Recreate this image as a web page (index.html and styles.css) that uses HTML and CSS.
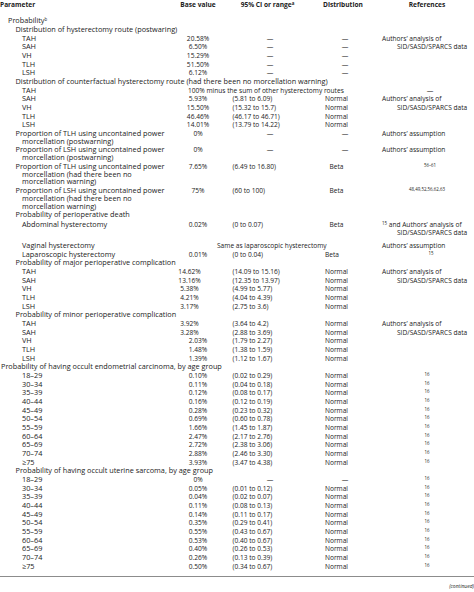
FILE: index.html
```html
<!DOCTYPE html>
<html>
<head>
<meta charset="utf-8">
<link rel="stylesheet" href="styles.css">
</head>
<body>
<table class="tbl">
<colgroup><col class="c1"><col class="c2"><col class="c3"><col class="c4"><col class="c5"></colgroup>
<thead>
<tr class="head">
<th class="h-param">Parameter</th>
<th class="h-bv">Base value</th>
<th class="h-ci">95% CI or range<span class="sup">a</span></th>
<th class="h-dist">Distribution</th>
<th class="h-ref">References</th>
</tr>
</thead>
<tbody>
<tr class="first"><td class="l0" colspan="5">Probability<span class="sup">b</span></td></tr>
<tr><td class="l1" colspan="5">Distribution of hysterectomy route (postwaring)</td></tr>
<tr><td class="l2">TAH</td><td class="bv">20.58%</td><td class="ci-d">—</td><td class="di-d">—</td><td class="rf">Authors’ analysis of</td></tr>
<tr><td class="l2">SAH</td><td class="bv">6.50%</td><td class="ci-d">—</td><td class="di-d">—</td><td class="rf cont">SID/SASD/SPARCS data</td></tr>
<tr><td class="l2">VH</td><td class="bv">15.29%</td><td class="ci-d">—</td><td class="di-d">—</td><td></td></tr>
<tr><td class="l2">TLH</td><td class="bv">51.50%</td><td class="ci-d">—</td><td class="di-d">—</td><td></td></tr>
<tr><td class="l2">LSH</td><td class="bv">6.12%</td><td class="ci-d">—</td><td class="di-d">—</td><td></td></tr>
<tr><td class="l1" colspan="5">Distribution of counterfactual hysterectomy route (had there been no morcellation warning)</td></tr>
<tr><td class="l2">TAH</td><td class="span-minus" colspan="3">100% minus the sum of other hysterectomy routes</td><td class="rf-d">—</td></tr>
<tr><td class="l2">SAH</td><td class="bv">5.93%</td><td class="ci">(5.81 to 6.09)</td><td class="di">Normal</td><td class="rf">Authors’ analysis of</td></tr>
<tr><td class="l2">VH</td><td class="bv">15.50%</td><td class="ci">(15.32 to 15.7)</td><td class="di">Normal</td><td class="rf cont">SID/SASD/SPARCS data</td></tr>
<tr><td class="l2">TLH</td><td class="bv">46.46%</td><td class="ci">(46.17 to 46.71)</td><td class="di">Normal</td><td></td></tr>
<tr><td class="l2">LSH</td><td class="bv">14.01%</td><td class="ci">(13.79 to 14.22)</td><td class="di">Normal</td><td></td></tr>
<tr><td class="l1w">Proportion of TLH using uncontained power morcellation (postwarning)</td><td class="bv">0%</td><td class="ci-d">—</td><td class="di-d">—</td><td class="rf">Authors’ assumption</td></tr>
<tr><td class="l1w">Proportion of LSH using uncontained power morcellation (postwarning)</td><td class="bv">0%</td><td class="ci-d">—</td><td class="di-d">—</td><td class="rf">Authors’ assumption</td></tr>
<tr><td class="l1w">Proportion of TLH using uncontained power morcellation (had there been no morcellation warning)</td><td class="bv">7.65%</td><td class="ci">(6.49 to 16.80)</td><td class="di">Beta</td><td class="rf-s rf-s1"><span class="sup">56–61</span></td></tr>
<tr><td class="l1w">Proportion of LSH using uncontained power morcellation (had there been no morcellation warning)</td><td class="bv">75%</td><td class="ci">(60 to 100)</td><td class="di">Beta</td><td class="rf-s"><span class="sup">48,49,52,56,62,63</span></td></tr>
<tr><td class="l1" colspan="5">Probability of perioperative death</td></tr>
<tr class="tall"><td class="l2">Abdominal hysterectomy</td><td class="bv">0.02%</td><td class="ci">(0 to 0.07)</td><td class="di">Beta</td><td class="rf rf-wrap"><span class="sup">15</span> and Authors’ analysis of SID/SASD/SPARCS data</td></tr>
<tr><td class="l2">Vaginal hysterectomy</td><td class="span-same" colspan="3">Same as laparoscopic hysterectomy</td><td class="rf">Authors’ assumption</td></tr>
<tr><td class="l2">Laparoscopic hysterectomy</td><td class="bv">0.01%</td><td class="ci">(0 to 0.04)</td><td class="di di-left">Beta</td><td class="rf-s rf-s2"><span class="sup">15</span></td></tr>
<tr><td class="l1" colspan="5">Probability of major perioperative complication</td></tr>
<tr><td class="l2">TAH</td><td class="bv shift">14.62%</td><td class="ci">(14.09 to 15.16)</td><td class="di">Normal</td><td class="rf">Authors’ analysis of</td></tr>
<tr><td class="l2">SAH</td><td class="bv shift">13.16%</td><td class="ci">(12.35 to 13.97)</td><td class="di">Normal</td><td class="rf cont">SID/SASD/SPARCS data</td></tr>
<tr><td class="l2">VH</td><td class="bv shift">5.38%</td><td class="ci">(4.99 to 5.77)</td><td class="di">Normal</td><td></td></tr>
<tr><td class="l2">TLH</td><td class="bv shift">4.21%</td><td class="ci">(4.04 to 4.39)</td><td class="di">Normal</td><td></td></tr>
<tr><td class="l2">LSH</td><td class="bv shift">3.17%</td><td class="ci">(2.75 to 3.6)</td><td class="di">Normal</td><td></td></tr>
<tr><td class="l1" colspan="5">Probability of minor perioperative complication</td></tr>
<tr><td class="l2">TAH</td><td class="bv shift">3.92%</td><td class="ci">(3.64 to 4.2)</td><td class="di">Normal</td><td class="rf">Authors’ analysis of</td></tr>
<tr><td class="l2">SAH</td><td class="bv shift">3.28%</td><td class="ci">(2.88 to 3.69)</td><td class="di">Normal</td><td class="rf cont">SID/SASD/SPARCS data</td></tr>
<tr><td class="l2">VH</td><td class="bv">2.03%</td><td class="ci">(1.79 to 2.27)</td><td class="di">Normal</td><td></td></tr>
<tr><td class="l2">TLH</td><td class="bv">1.48%</td><td class="ci">(1.38 to 1.59)</td><td class="di">Normal</td><td></td></tr>
<tr><td class="l2">LSH</td><td class="bv">1.39%</td><td class="ci">(1.12 to 1.67)</td><td class="di">Normal</td><td></td></tr>
<tr><td class="lt" colspan="5">Probability of having occult endometrial carcinoma, by age group</td></tr>
<tr><td class="l2">18–29</td><td class="bv">0.10%</td><td class="ci">(0.02 to 0.29)</td><td class="di">Normal</td><td class="rf-s"><span class="sup">16</span></td></tr>
<tr><td class="l2">30–34</td><td class="bv">0.11%</td><td class="ci">(0.04 to 0.18)</td><td class="di">Normal</td><td class="rf-s"><span class="sup">16</span></td></tr>
<tr><td class="l2">35–39</td><td class="bv">0.12%</td><td class="ci">(0.08 to 0.17)</td><td class="di">Normal</td><td class="rf-s"><span class="sup">16</span></td></tr>
<tr><td class="l2">40–44</td><td class="bv">0.16%</td><td class="ci">(0.12 to 0.19)</td><td class="di">Normal</td><td class="rf-s"><span class="sup">16</span></td></tr>
<tr><td class="l2">45–49</td><td class="bv">0.28%</td><td class="ci">(0.23 to 0.32)</td><td class="di">Normal</td><td class="rf-s"><span class="sup">16</span></td></tr>
<tr><td class="l2">50–54</td><td class="bv">0.69%</td><td class="ci">(0.60 to 0.78)</td><td class="di">Normal</td><td class="rf-s"><span class="sup">16</span></td></tr>
<tr><td class="l2">55–59</td><td class="bv">1.66%</td><td class="ci">(1.45 to 1.87)</td><td class="di">Normal</td><td class="rf-s"><span class="sup">16</span></td></tr>
<tr><td class="l2">60–64</td><td class="bv">2.47%</td><td class="ci">(2.17 to 2.76)</td><td class="di">Normal</td><td class="rf-s"><span class="sup">16</span></td></tr>
<tr><td class="l2">65–69</td><td class="bv">2.72%</td><td class="ci">(2.38 to 3.06)</td><td class="di">Normal</td><td class="rf-s"><span class="sup">16</span></td></tr>
<tr><td class="l2">70–74</td><td class="bv">2.88%</td><td class="ci">(2.46 to 3.30)</td><td class="di">Normal</td><td class="rf-s"><span class="sup">16</span></td></tr>
<tr><td class="l2">≥75</td><td class="bv">3.93%</td><td class="ci">(3.47 to 4.38)</td><td class="di">Normal</td><td class="rf-s"><span class="sup">16</span></td></tr>
<tr><td class="l1" colspan="5">Probability of having occult uterine sarcoma, by age group</td></tr>
<tr><td class="l2">18–29</td><td class="bv">0%</td><td class="ci-d">—</td><td class="di-d">—</td><td class="rf-s"><span class="sup">16</span></td></tr>
<tr><td class="l2">30–34</td><td class="bv">0.05%</td><td class="ci">(0.01 to 0.12)</td><td class="di">Normal</td><td class="rf-s"><span class="sup">16</span></td></tr>
<tr><td class="l2">35–39</td><td class="bv">0.04%</td><td class="ci">(0.02 to 0.07)</td><td class="di">Normal</td><td class="rf-s"><span class="sup">16</span></td></tr>
<tr><td class="l2">40–44</td><td class="bv">0.11%</td><td class="ci">(0.08 to 0.13)</td><td class="di">Normal</td><td class="rf-s"><span class="sup">16</span></td></tr>
<tr><td class="l2">45–49</td><td class="bv">0.14%</td><td class="ci">(0.11 to 0.17)</td><td class="di">Normal</td><td class="rf-s"><span class="sup">16</span></td></tr>
<tr><td class="l2">50–54</td><td class="bv">0.35%</td><td class="ci">(0.29 to 0.41)</td><td class="di">Normal</td><td class="rf-s"><span class="sup">16</span></td></tr>
<tr><td class="l2">55–59</td><td class="bv">0.55%</td><td class="ci">(0.43 to 0.67)</td><td class="di">Normal</td><td class="rf-s"><span class="sup">16</span></td></tr>
<tr><td class="l2">60–64</td><td class="bv">0.53%</td><td class="ci">(0.40 to 0.67)</td><td class="di">Normal</td><td class="rf-s"><span class="sup">16</span></td></tr>
<tr><td class="l2">65–69</td><td class="bv">0.40%</td><td class="ci">(0.26 to 0.53)</td><td class="di">Normal</td><td class="rf-s"><span class="sup">16</span></td></tr>
<tr><td class="l2">70–74</td><td class="bv">0.26%</td><td class="ci">(0.13 to 0.39)</td><td class="di">Normal</td><td class="rf-s"><span class="sup">16</span></td></tr>
<tr class="last"><td class="l2">≥75</td><td class="bv">0.50%</td><td class="ci">(0.34 to 0.67)</td><td class="di">Normal</td><td class="rf-s"><span class="sup">16</span></td></tr>
</tbody>
</table>
<div class="continued">(continued)</div>
</body>
</html>
```
FILE: styles.css
```css
html, body {
  margin: 0;
  padding: 0;
  background: #ffffff;
}
body {
  width: 474px;
  overflow: hidden;
  color: #222222;
  font-family: "Open Sans", "Liberation Sans", Arial, sans-serif;
  font-size: 6.6px;
}
.tbl {
  border-collapse: collapse;
  table-layout: fixed;
  width: 474px;
}
.c1 { width: 176px; }
.c2 { width: 44px; }
.c3 { width: 100px; }
.c4 { width: 60px; }
.c5 { width: 94px; }

th, td {
  padding: 0.45px 0;
  line-height: 7.8px;
  vertical-align: top;
  white-space: nowrap;
  font-weight: normal;
  text-align: left;
}
.head th {
  font-weight: bold;
  padding-top: 1px;
  padding-bottom: 4px;
}
.h-param { padding-left: 0; }
.h-bv { text-align: center; }
.h-ci { text-align: center; padding-right: 5px; }
.h-dist { text-align: center; padding-right: 14px; }
.h-ref { text-align: center; }

.first td { padding-top: 4.4px; }
.last td { padding-bottom: 5.5px; border-bottom: 1px solid #8c8c8c; }

.lt, .l0, .l1, .l2, .l1w { font-size: 7.3px; }
.lt { padding-left: 1px; }
.l0 { padding-left: 8px; }
.l1 { padding-left: 15.5px; }
.l2 { padding-left: 22px; }
.l1w {
  white-space: normal;
  padding-left: 22px;
  text-indent: -6.5px;
  padding-right: 8px;
}

.bv { text-align: center; }
.bv.shift { padding-right: 17px; }
.ci { padding-left: 12.5px; }
.ci-d { text-align: center; }
.di { text-align: center; padding-right: 27px; }
.di.di-left { text-align: left; padding-left: 5px; padding-right: 0; }
.di-d { text-align: center; padding-right: 10px; }
.rf { padding-left: 2px; }
.rf.cont { padding-left: 17px; }
.rf-wrap {
  white-space: normal;
  padding-left: 17px;
  text-indent: -15px;
}
.rf-d { text-align: center; padding-left: 6px; }
.rf-s { text-align: center; }
.rf-s1 { padding-left: 6px; }
.rf-s2 { padding-left: 8px; }

.span-minus { padding-left: 12px; }
.span-same { padding-left: 41px; }

.tall td { padding-top: 1.6px; padding-bottom: 4.6px; }

.sup {
  font-size: 4.4px;
  line-height: 0;
  vertical-align: 2.5px;
}

.continued {
  text-align: right;
  font-style: italic;
  font-size: 5px;
  line-height: 6px;
  padding-top: 6px;
}
```
